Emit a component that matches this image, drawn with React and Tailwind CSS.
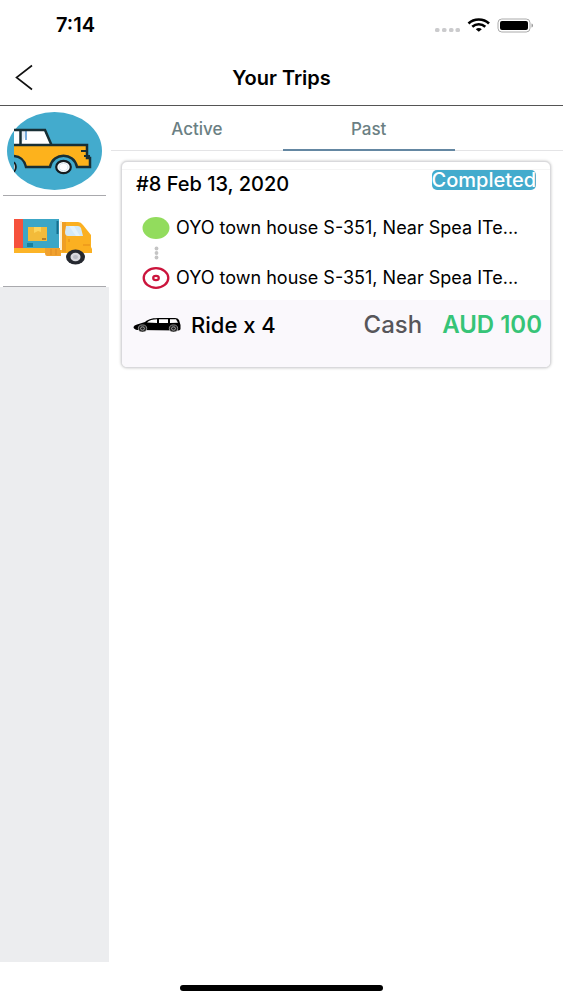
import React, { useState } from "react";

function BackIcon() {
  return (
    <svg width="20" height="28" viewBox="0 0 20 28" fill="none" stroke="#111" strokeWidth="1.6">
      <path d="M18 1.500 2.500 13.500 18 25.500" />
    </svg>
  );
}

function StatusIcons() {
  return (
    <svg width="100" height="18" viewBox="0 0 100 18" aria-hidden="true">
      <g fill="#cbcbcd">
        <rect x="0" y="12" width="4.500" height="4" rx="1.600" />
        <rect x="7" y="12" width="4.500" height="4" rx="1.600" />
        <rect x="14" y="12" width="4.500" height="4" rx="1.600" />
        <rect x="20.500" y="12" width="4.500" height="4" rx="1.600" />
      </g>
      <g fill="none" stroke="#000" strokeWidth="2.600">
        <path d="M33.500 7.500C39 2.200 48.500 2.200 54 7.500" />
        <path d="M37.300 10.800C41 7.400 46.500 7.400 50.300 10.800" />
      </g>
      <path d="M40.800 13.200c1.800-1.500 4.200-1.500 6 0l-3 2.600z" />
      <rect x="63" y="3" width="32" height="13" rx="3.800" fill="#fff" stroke="#aaa" />
      <rect x="65" y="5" width="28" height="9" rx="2" />
      <path d="M96.500 7.500c2 .5 2 3.500 0 4z" fill="#999" />
    </svg>
  );
}

function TaxiPicture() {
  return (
    <svg className="w-full" viewBox="0 0 109 89" aria-hidden="true">
      <defs>
        <clipPath id="taxi-edge">
          <path d="M14 10h85v70H14z" />
        </clipPath>
      </defs>
      <ellipse cx="54.500" cy="45" rx="47.500" ry="39" fill="#43abcd" />
      <g clipPath="url(#taxi-edge)">
        <path d="M12 24h32l7 15H12z" fill="#fff" />
        <path d="M21 24h4v7l-4 7z" fill="#e4edf6" />
        <path d="M26 25v9" stroke="#4a8fd0" strokeWidth="1.500" />
        <path d="M12 39h75v13h3v9H77C74 46 53 46 50 61H26C24 53 20 50 12 50z" fill="#fdb21c" />
        <path d="M12 24h33l6.500 15M20.500 24v15M12 39h75v13h3v9H77C74 46 53 46 50 61H26C24 53 20 50 12 50" fill="none" stroke="#182f35" strokeWidth="2.500" />
        <path d="M81 45h6M84 50h6" stroke="#182f35" strokeWidth="1.800" />
        <ellipse cx="12" cy="61" rx="3.800" ry="5" fill="#fff" stroke="#151d20" strokeWidth="2" />
        <ellipse cx="63.500" cy="61" rx="7.300" ry="6.200" fill="#fff" stroke="#151d20" strokeWidth="2.200" />
        <ellipse cx="63.500" cy="61" rx="4.500" ry="3.800" fill="none" stroke="#d4e5ee" />
      </g>
    </svg>
  );
}

function TruckPicture() {
  return (
    <svg className="w-full" viewBox="0 0 109 90" aria-hidden="true">
      <path d="M14 23h9v30h-9z" fill="#f6513c" />
      <path d="M23 23h36v30H23z" fill="#3ca6c6" />
      <path d="M14 52h48v5H14z" fill="#fcb427" />
      <path d="M45 52h16v8H47q-2 0-2-3z" fill="#f0a12e" />
      <path d="M51 53v6m5-6v6" stroke="#df8b22" strokeWidth="1" />
      <path d="M28 31h19v14H28z" fill="#f3bb3a" />
      <path d="M34 31h7v5l-3-1-4 2z" fill="#fdd45b" />
      <path d="M42 43h4" stroke="#b77d27" strokeWidth="2" />
      <path d="M57.500 25v13" stroke="#166e8e" strokeWidth="2" />
      <path d="M27 47h6v4h-6z" fill="#167f9e" />
      <path d="M60 25h2v29h-2z" fill="#fff1d2" />
      <path d="M62 26h16q3 0 5 3l8 10v12l1 2v4H62z" fill="#fbb021" />
      <path d="M62 26h4v30h-4z" fill="#ef9f24" />
      <path d="M66 30h12q2 0 3 2l2 8H68q-3 0-3-4z" fill="#d3e9f7" />
      <path d="m69 30 7 10h4l-6-10z" fill="#e3f2fb" />
      <path d="M69 43v3m14 3h7" stroke="#e58c18" strokeWidth="1" />
      <ellipse cx="75.500" cy="61" rx="9.500" ry="7.500" fill="#25282f" />
      <ellipse cx="75.500" cy="61" rx="5" ry="4.300" fill="#d8d9de" />
      <ellipse cx="75.500" cy="61" rx="2.500" ry="2" fill="#b9bcc4" />
    </svg>
  );
}

function CarGlyph() {
  return (
    <svg className="shrink-0" width="48" height="16" viewBox="0 0 48 16" aria-hidden="true">
      <path d="M.5 10Q1 8 4 7.500L12 5C16 1.500 20 1 28 1h14q3 0 4 2l1.500 5v4q0 1-2 1.500L4 13Q.5 12 .5 10z" />
      <path d="M14 5.500c2-2.200 6-3.300 10-3.300V6zM26 2.200h9V6h-9zM37 2.200h6l2 3.500-8 .3z" fill="#fff" />
      <g fill="#222" stroke="#fff" strokeWidth=".5">
        <ellipse cx="9.500" cy="11.500" rx="4.200" ry="3.600" />
        <ellipse cx="40.500" cy="11.500" rx="4.200" ry="3.600" />
        <ellipse cx="9.500" cy="11.500" rx="2" ry="1.700" />
        <ellipse cx="40.500" cy="11.500" rx="2" ry="1.700" />
      </g>
    </svg>
  );
}

function RouteMarks() {
  return (
    <svg className="shrink-0" width="28" height="74" viewBox="0 0 28 74" aria-hidden="true">
      <ellipse cx="14" cy="12" rx="13.500" ry="11" fill="#92dc5d" />
      <g fill="#c4c4c4">
        <circle cx="14.500" cy="32.500" r="1.900" />
        <circle cx="14.500" cy="37" r="1.900" />
        <circle cx="14.500" cy="41.500" r="1.900" />
      </g>
      <g fill="none" stroke="#cb143c">
        <ellipse cx="14" cy="62" rx="12.300" ry="9.800" strokeWidth="2.300" />
        <ellipse cx="14" cy="62" rx="2.800" ry="2.200" strokeWidth="2.200" />
      </g>
    </svg>
  );
}

function TripCard() {
  return (
    <article className="mt-2.5 mr-3 ml-2.5 overflow-hidden rounded-md border border-[#d9d9dc] bg-white shadow-[0_0_3px_rgba(0,0,0,0.25)]">
      <div className="mt-[7px] flex items-start justify-between border-t border-[#f5f5f5] px-3.5">
        <h2 className="text-[20px] leading-7 font-medium">#8 Feb 13, 2020</h2>
        <span className="rounded-[5px] bg-[#43abcd] text-[20px] leading-5 font-medium text-white">Completed</span>
      </div>
      <div className="mt-[18px] mb-2.5 flex gap-1.5 px-5">
        <RouteMarks />
        <div className="flex min-w-0 flex-col justify-between text-[18px] leading-6 whitespace-nowrap">
          <p>OYO town house S-351, Near Spea ITe...</p>
          <p>OYO town house S-351, Near Spea ITe...</p>
        </div>
      </div>
      <div className="flex items-center bg-[#faf8fc] pt-[11px] pr-2 pb-7 pl-[11px]">
        <CarGlyph />
        <span className="ml-2.5 text-[22px] leading-7 font-medium">Ride x 4</span>
        <span className="ml-auto text-[24px] leading-7 font-medium text-[#57565a]">Cash</span>
        <span className="ml-5 text-[24px] leading-7 font-semibold text-[#36c477]">AUD 100</span>
      </div>
    </article>
  );
}

const tabs = ["Active", "Past"];

export default function App() {
  const [selected, setSelected] = useState("Past");

  return (
    <div className="flex min-h-screen flex-col bg-white font-['Inter',sans-serif] text-black">
      <div className="flex h-[50px] items-center justify-between pr-7 pl-14">
        <span className="text-[20px] font-semibold">7:14</span>
        <StatusIcons />
      </div>
      <header className="grid h-14 grid-cols-[1fr_auto_1fr] items-center border-b border-[#555] px-3.5">
        <button type="button" aria-label="Back" className="w-5">
          <BackIcon />
        </button>
        <h1 className="text-[20px] font-semibold">Your Trips</h1>
      </header>
      <div className="flex flex-1">
        <nav aria-label="Trip type" className="w-[109px] shrink-0 bg-[#ecedef]">
          <button type="button" aria-label="Rides" className="block w-full bg-white">
            <TaxiPicture />
            <span className="mx-[3px] block border-b border-[#a9a9ad]" />
          </button>
          <button type="button" aria-label="Deliveries" className="block w-full bg-white">
            <TruckPicture />
            <span className="mx-[3px] block border-b border-[#a9a9ad]" />
          </button>
        </nav>
        <main className="min-w-0 flex-1 pl-[2px]">
          <div role="tablist" className="flex h-[45px] border-b border-[#e4e4e6]">
            {tabs.map((tab) => (
              <button
                key={tab}
                type="button"
                role="tab"
                aria-selected={selected === tab}
                onClick={() => setSelected(tab)}
                className={
                  selected === tab
                    ? "-mb-px w-[38%] border-b-2 border-[#6487a2] pt-1 text-[17px] font-medium text-[#6b7f83]"
                    : "w-[38%] pt-1 text-[17px] font-medium text-[#6b7f83]"
                }
              >
                {tab}
              </button>
            ))}
          </div>
          <TripCard />
        </main>
      </div>
      <footer className="flex h-[38px] items-end justify-center pb-[9px]">
        <div className="h-[6px] w-[36%] rounded-full bg-black" />
      </footer>
    </div>
  );
}
